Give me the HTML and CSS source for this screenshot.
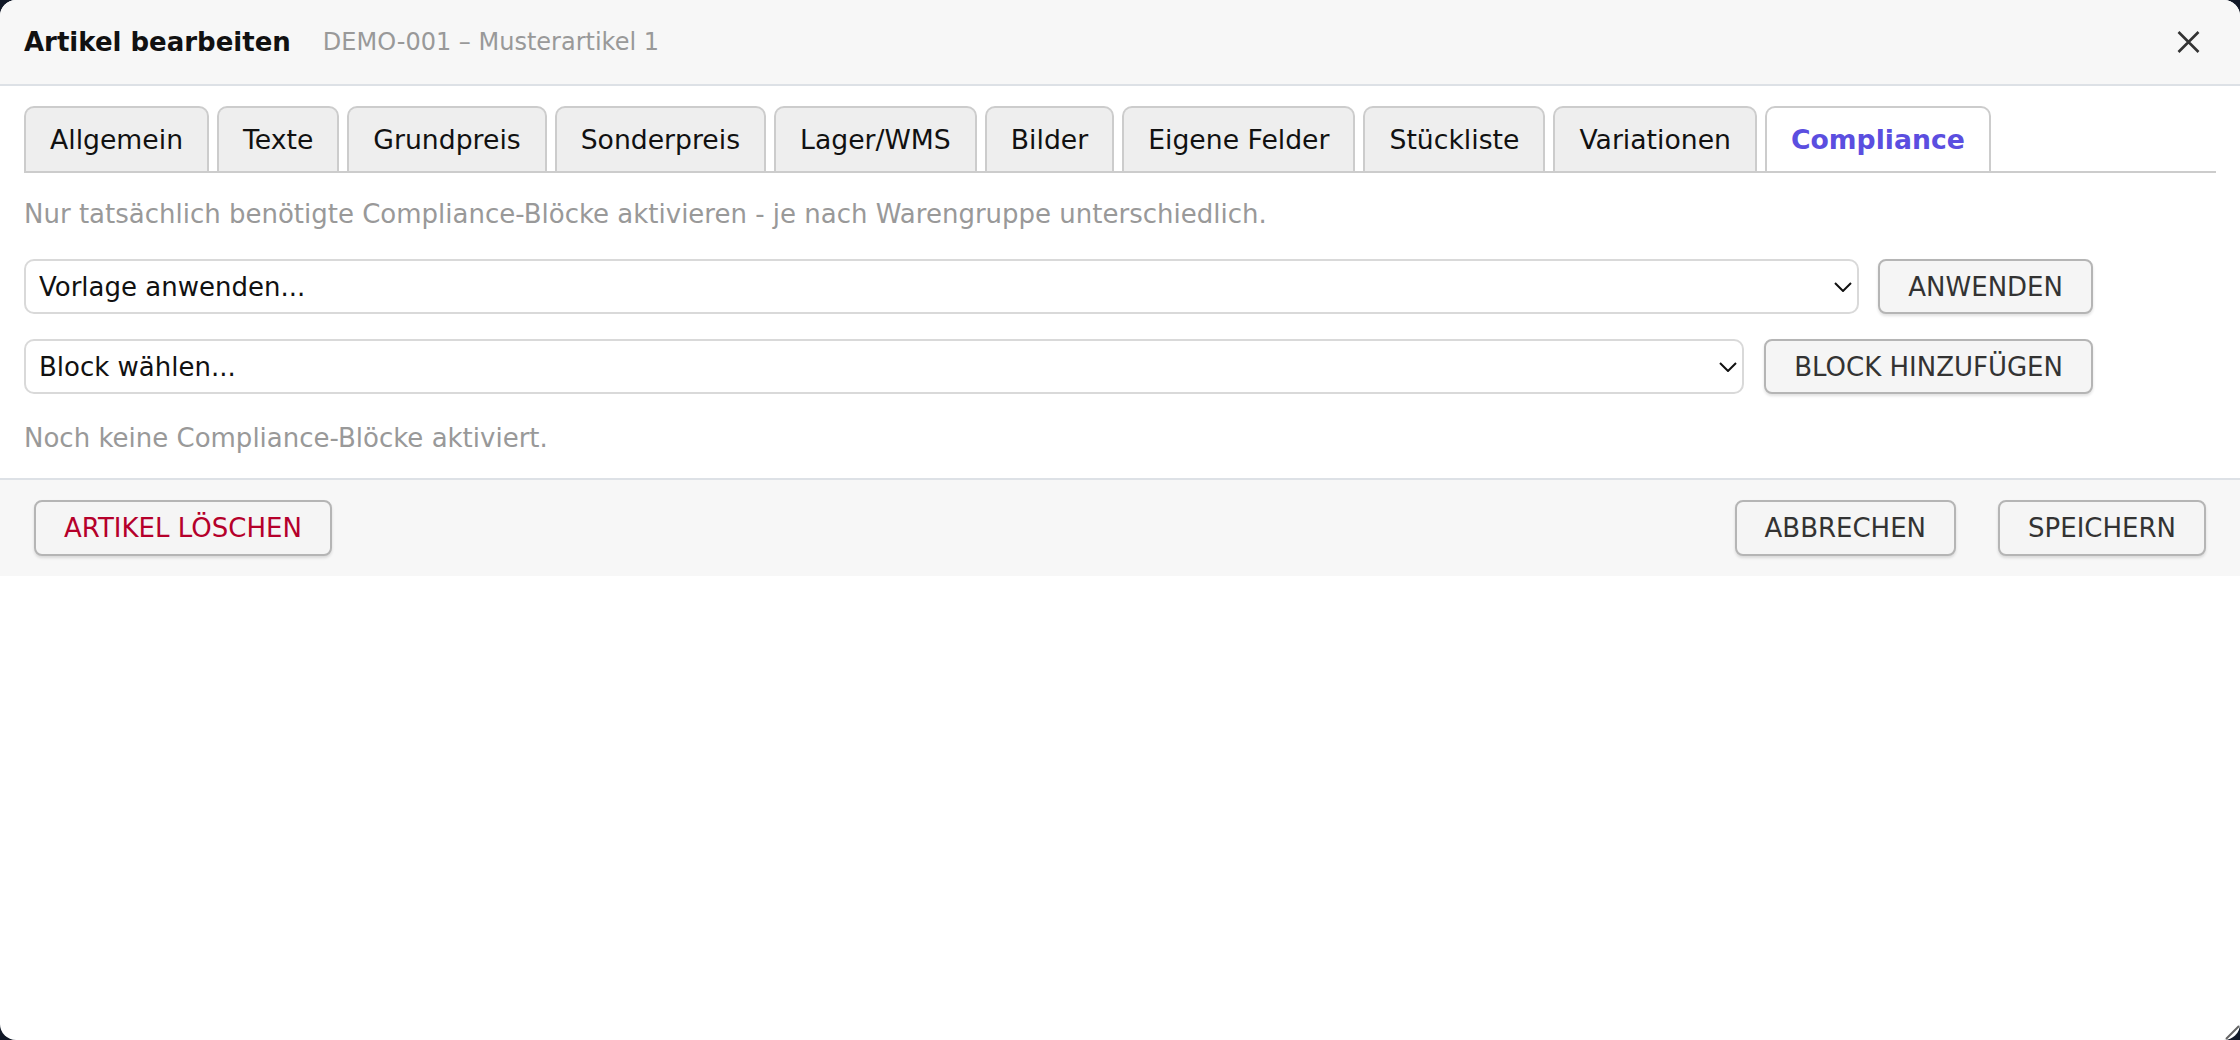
FILE: index.html
```html
<!DOCTYPE html>
<html>
<head>
<meta charset="utf-8">
<title>Artikel bearbeiten</title>
<link rel="stylesheet" href="styles.css">
</head>
<body>
<div class="dialog">
    <div class="dlg-head">
        <span class="dlg-title">Artikel bearbeiten</span>
        <span class="dlg-sub">DEMO-001 – Musterartikel 1</span>
        <button class="dlg-close" title="Schließen">
            <svg width="23" height="22" viewBox="0 0 23 22"><path d="M1.5 1 L21.5 21 M21.5 1 L1.5 21" stroke="#333" stroke-width="2.6" fill="none"/></svg>
        </button>
    </div>

    <div class="dlg-body">
        <div class="tabs">
            <span class="tab">Allgemein</span>
            <span class="tab">Texte</span>
            <span class="tab">Grundpreis</span>
            <span class="tab">Sonderpreis</span>
            <span class="tab">Lager/WMS</span>
            <span class="tab">Bilder</span>
            <span class="tab">Eigene Felder</span>
            <span class="tab">Stückliste</span>
            <span class="tab">Variationen</span>
            <span class="tab active">Compliance</span>
        </div>

        <p class="hint">Nur tatsächlich benötigte Compliance-Blöcke aktivieren - je nach Warengruppe unterschiedlich.</p>

        <div class="row">
            <div class="sel">
                <select><option>Vorlage anwenden...</option></select>
                <svg class="chev" width="18" height="10" viewBox="0 0 18 10"><path d="M1 1 L9 9 L17 1" stroke="#111" stroke-width="2" fill="none"/></svg>
            </div>
            <button class="btn">ANWENDEN</button>
        </div>

        <div class="row row2">
            <div class="sel">
                <select><option>Block wählen...</option></select>
                <svg class="chev" width="18" height="10" viewBox="0 0 18 10"><path d="M1 1 L9 9 L17 1" stroke="#111" stroke-width="2" fill="none"/></svg>
            </div>
            <button class="btn">BLOCK HINZUFÜGEN</button>
        </div>

        <p class="empty">Noch keine Compliance-Blöcke aktiviert.</p>
    </div>

    <div class="dlg-foot">
        <button class="btn danger">ARTIKEL LÖSCHEN</button>
        <div class="foot-right">
            <button class="btn">ABBRECHEN</button>
            <button class="btn">SPEICHERN</button>
        </div>
    </div>

    <svg class="grip" width="16" height="16" viewBox="0 0 16 16"><path d="M2 15 L15 2 M9 15 L15 9" stroke="#666" stroke-width="2" fill="none"/></svg>
</div>
</body>
</html>
```

FILE: styles.css
```css
html,body{
    height:100%;
}
body{
    margin:0;
    overflow:hidden;
    background:#111827;
    font-family:"DejaVu Sans", Verdana, sans-serif;
    color:#111;
}
.dialog{
    position:relative;
    height:100%;
    background:#fff;
    border-radius:16px;
    overflow:hidden;
}

/* kopf */
.dlg-head{
    display:flex;
    align-items:center;
    height:84px;
    padding:0 40px 0 24px;
    background:#f7f7f7;
    border-bottom:2px solid #dde1e6;
}
.dlg-title{
    font-size:26px;
    font-weight:bold;
    color:#111;
}
.dlg-sub{
    margin-left:32px;
    font-size:24px;
    color:#999;
}
.dlg-close{
    margin-left:auto;
    padding:0;
    border:0;
    background:none;
    display:flex;
    cursor:pointer;
}

/* inhalt */
.dlg-body{
    padding:20px 24px 25px;
}
.tabs{
    display:flex;
    gap:8px;
    border-bottom:2px solid #ccc;
}
.tab{
    padding:16px 24px;
    font-size:26.67px;
    line-height:31px;
    background:#eee;
    border:2px solid #ccc;
    border-bottom:0;
    border-radius:10px 10px 0 0;
    color:#111;
}
.tab.active{
    background:#fff;
    color:#5b4ee0;
    font-weight:bold;
}
.hint,.empty{
    margin:26px 0 0;
    font-size:26px;
    line-height:30px;
    color:#999;
}
.empty{
    margin-top:29px;
}
.row{
    display:flex;
    gap:19px;
    max-width:2069px;
    margin-top:30px;
}
.row2{
    gap:20px;
    margin-top:25px;
}
.sel{
    position:relative;
    flex:1;
}
.sel select{
    -webkit-appearance:none;
    appearance:none;
    width:100%;
    height:55px;
    padding:0 40px 0 13px;
    font-family:inherit;
    font-size:26px;
    color:#111;
    background:#fff;
    border:2px solid #d9d9d9;
    border-radius:10px;
}
.chev{
    position:absolute;
    right:7px;
    top:23px;
    pointer-events:none;
}
.btn{
    height:55px;
    padding:0 28px;
    font-family:inherit;
    font-size:26px;
    color:#333;
    background:#f5f5f5;
    border:2px solid #b5b5b5;
    border-radius:8px;
    box-shadow:0 2px 3px rgba(0,0,0,.12);
    cursor:pointer;
}
.btn.danger{
    color:#b5002b;
}

/* fuss */
.dlg-foot{
    display:flex;
    justify-content:space-between;
    padding:20px 34px 20px 34px;
    background:#f7f7f7;
    border-top:2px solid #dde1e6;
}
.dlg-foot .btn{
    height:56px;
}
.foot-right{
    display:flex;
    gap:42px;
}
.grip{
    position:absolute;
    right:0;
    bottom:0;
}
```
